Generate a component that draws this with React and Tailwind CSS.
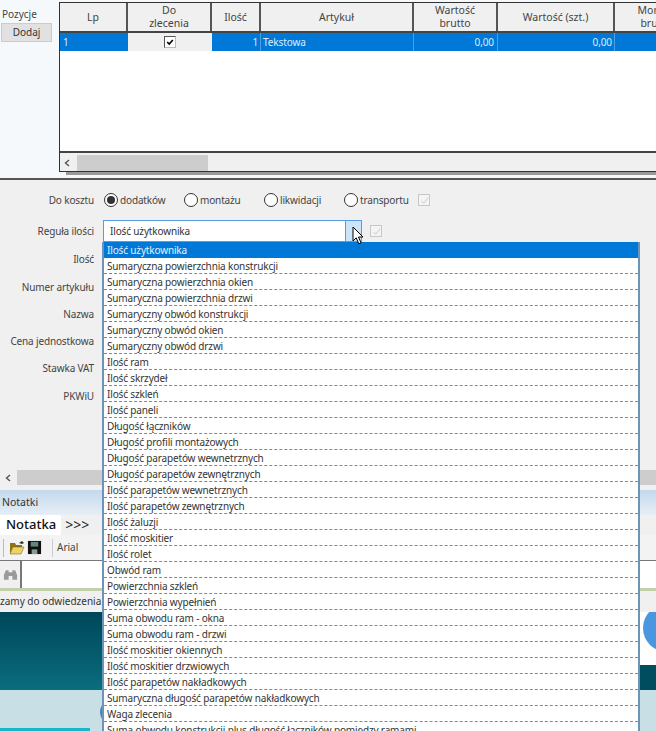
import React from 'react';

const columns = [
  { label: ['Lp'], width: 'w-[68px]' },
  { label: ['Do', 'zlecenia'], width: 'w-[84px]' },
  { label: ['Ilość'], width: 'w-[49px]' },
  { label: ['Artykuł'], width: 'w-[153px]' },
  { label: ['Wartość', 'brutto'], width: 'w-[84px]' },
  { label: ['Wartość (szt.)'], width: 'w-[117px]' },
  { label: ['Montaż', 'brutto'], width: 'w-[84px]' },
];

const options = [
  'Ilość użytkownika',
  'Sumaryczna powierzchnia konstrukcji',
  'Sumaryczna powierzchnia okien',
  'Sumaryczna powierzchnia drzwi',
  'Sumaryczny obwód konstrukcji',
  'Sumaryczny obwód okien',
  'Sumaryczny obwód drzwi',
  'Ilość ram',
  'Ilość skrzydeł',
  'Ilość szkleń',
  'Ilość paneli',
  'Długość łączników',
  'Długość profili montażowych',
  'Długość parapetów wewnetrznych',
  'Długość parapetów zewnętrznych',
  'Ilość parapetów wewnetrznych',
  'Ilość parapetów zewnętrznych',
  'Ilość żaluzji',
  'Ilość moskitier',
  'Ilość rolet',
  'Obwód ram',
  'Powierzchnia szkleń',
  'Powierzchnia wypełnień',
  'Suma obwodu ram - okna',
  'Suma obwodu ram - drzwi',
  'Ilość moskitier okiennych',
  'Ilość moskitier drzwiowych',
  'Ilość parapetów nakładkowych',
  'Sumaryczna długość parapetów nakładkowych',
  'Waga zlecenia',
  'Suma obwodu konstrukcji plus długość łączników pomiędzy ramami',
];

const labels = [
  ['Ilość', 'h-[28px]'],
  ['Numer artykułu', 'h-[28px]'],
  ['Nazwa', 'h-[27px]'],
  ['Cena jednostkowa', 'h-[27px]'],
  ['Stawka VAT', 'h-[27px]'],
  ['PKWiU', 'h-[28px]'],
];

const Radio = ({ label, checked, width }) => (
  <div className={`flex items-center gap-[2px] ${width}`}>
    <span className="flex h-[14px] w-[14px] items-center justify-center rounded-full border border-[#333] bg-white">
      {checked && <span className="h-[8px] w-[8px] rounded-full bg-[#333]" />}
    </span>
    <span className="text-[#444]">{label}</span>
  </div>
);

const DisabledCheck = () => (
  <span className="flex h-[12px] w-[12px] items-center justify-center border border-[#c8c8c8] bg-[#f4f4f4]">
    <svg viewBox="0 0 10 10" className="h-[9px] w-[9px]" fill="none" stroke="#c4c4c4" strokeWidth="1">
      <path d="M1.5 5.5l2.5 2.5 5-6" />
    </svg>
  </span>
);

const Chevron = () => (
  <svg viewBox="0 0 6 8" className="h-[8px] w-[6px]" fill="none" stroke="#555" strokeWidth="1.4">
    <path d="M5 1L1.500 4 5 7" />
  </svg>
);

const Grid = () => (
  <div className="flex h-[170px] flex-col overflow-hidden border border-r-0 border-[#333] bg-white">
    <div className="flex h-[30px] shrink-0 border-b-2 border-[#444]">
      {columns.map((c) => (
        <div
          key={c.label[0]}
          className={`${c.width} flex shrink-0 flex-col items-center justify-center border-r-2 border-[#555] bg-[#f0f0f0] text-[10.5px] leading-[13px] text-[#444]`}
        >
          {c.label.map((l) => (
            <span key={l} className="whitespace-nowrap">{l}</span>
          ))}
        </div>
      ))}
    </div>
    <div className="flex h-[18px] shrink-0 bg-[#0078d7] text-[10px] leading-[18px] tracking-[-0.1px] text-[#dcecfa]">
      <div className="w-[68px] shrink-0 pl-[3px]">1</div>
      <div className="flex w-[84px] shrink-0 items-center justify-center bg-[#f0f0f0]">
        <span className="flex h-[12px] w-[12px] items-center justify-center border border-t-[#555] border-l-[#555] border-r-[#bbb] border-b-[#bbb] bg-white">
          <svg viewBox="0 0 10 10" className="h-[8px] w-[8px]" fill="none" stroke="#000" strokeWidth="2">
            <path d="M1.500 5l2.500 2.500 4.500-5" />
          </svg>
        </span>
      </div>
      <div className="w-[49px] shrink-0 border-r border-[#4c9fe2] pr-[2px] text-right">1</div>
      <div className="w-[153px] shrink-0 border-r border-[#4c9fe2] pl-[2px]">Tekstowa</div>
      <div className="w-[84px] shrink-0 border-r border-[#4c9fe2] pr-[3px] text-right">0,00</div>
      <div className="w-[117px] shrink-0 border-r border-[#4c9fe2] pr-[2px] text-right">0,00</div>
      <div className="w-[84px] shrink-0" />
    </div>
    <div className="flex-1" />
    <div className="flex h-[20px] shrink-0 items-end border-t-2 border-[#444] bg-[#f0f0f0]">
      <span className="flex h-[16px] w-[17px] items-center pl-[4px]"><Chevron /></span>
      <div className="h-[16px] w-[131px] bg-[#cdcdcd]" />
    </div>
  </div>
);

const Dropdown = () => (
  <div className="absolute left-[102px] top-[62px] z-10 w-[538px] border-x-2 border-x-[#6b94b8] bg-white text-[10px] tracking-[-0.15px] text-[#333]">
    {options.map((o, i) => (
      <div
        key={o}
        className={`h-[16px] whitespace-nowrap pl-[3px] pt-[1px] leading-[15px] ${
          i === 0 ? 'bg-[#0078d7] text-[#e6f1fb]' : 'border-b border-dashed border-[#888]'
        }`}
      >
        {o}
      </div>
    ))}
  </div>
);

const Form = () => (
  <div className="relative h-[310px] bg-[#f0f0f0] text-[10px] tracking-[-0.15px] text-[#444]">
    <div className="flex h-[40px] items-center">
      <span className="w-[95px] pr-[1px] text-right">Do kosztu</span>
      <div className="ml-[9px] flex items-center">
        <Radio label="dodatków" checked width="w-[80px]" />
        <Radio label="montażu" width="w-[80px]" />
        <Radio label="likwidacji" width="w-[80px]" />
        <Radio label="transportu" width="w-[74px]" />
        <DisabledCheck />
      </div>
    </div>
    <div className="flex h-[22px] items-center">
      <span className="w-[95px] pr-[1px] text-right">Reguła ilości</span>
      <div className="ml-[8px] flex h-[22px] w-[243px] items-center border border-[#569de5] bg-white pl-[6px] text-[#333]">
        Ilość użytkownika
      </div>
      <div className="h-[22px] w-[16px] border border-l-0 border-[#569de5] bg-[#cce4f7]" />
      <span className="ml-[8px]"><DisabledCheck /></span>
    </div>
    <div className="pt-[3px]">
      {labels.map(([text, h]) => (
        <div key={text} className={`flex w-[95px] items-center justify-end pr-[1px] ${h}`}>{text}</div>
      ))}
    </div>
    <Dropdown />
    <svg viewBox="0 0 12 19" className="absolute left-[352px] top-[46px] z-20 h-[19px] w-[12px]">
      <path d="M1 1v14l3.200-3.200 2.600 6 2.200-1-2.500-5.800H11z" fill="#fff" stroke="#000" strokeWidth="1" />
    </svg>
    <div className="absolute bottom-[5px] left-0 flex h-[15px] w-full items-center">
      <span className="flex w-[17px] items-center pl-[5px]"><Chevron /></span>
      <div className="h-[15px] flex-1 bg-[#cdcdcd]" />
    </div>
  </div>
);

const Notes = () => (
  <div>
    <div className="flex h-[25px] items-center bg-gradient-to-b from-[#c4d9ed] to-[#e6eef6] pl-[2px] text-[10.5px] text-[#333]">
      Notatki
    </div>
    <div className="flex h-[20px] items-end bg-[#f0f0f0]">
      <span className="flex h-[20px] items-center bg-white pl-[6px] pr-[5px] text-[13px] font-medium text-[#111]">Notatka</span>
      <span className="pb-[1px] pl-[4px] text-[14px] leading-[18px] text-[#222]">{'>>>'}</span>
    </div>
    <div className="flex h-[26px] items-center border-b border-[#777] bg-[#f3f3f3] pl-[3px]">
      <span className="h-[18px] w-[1px] bg-[#bbb]" />
      <svg viewBox="0 0 16 16" className="ml-[5px] h-[16px] w-[16px]">
        <path d="M1 3h5l1 2h6v2H4L1 14z" fill="#8a7414" />
        <path d="M4 7h11l-3 7H1z" fill="#f0d264" stroke="#6b5a10" strokeWidth="0.5" />
        <path d="M10 3l3-2 2 2-2 1z" fill="#333" />
      </svg>
      <svg viewBox="0 0 16 16" className="ml-[2px] h-[15px] w-[15px]">
        <path d="M1 1h14v14H1z" fill="#111" />
        <path d="M4 2h8v5H4z" fill="#5f8a78" />
        <path d="M5 10h6v5H5z" fill="#8a9a9a" />
      </svg>
      <span className="ml-[10px] h-[18px] w-[1px] bg-[#ccc]" />
      <span className="ml-[4px] text-[10px] text-[#444]">Arial</span>
    </div>
    <div className="flex h-[30px] flex-col border-b-[3px] border-[#c3cfa8] bg-white">
      <div className="flex flex-1">
        <span className="flex w-[20px] items-center justify-center bg-[#f0f0f0]">
          <svg viewBox="0 0 16 12" className="h-[12px] w-[15px]" fill="#9a9a9a">
            <path d="M1 6l2-5h3v10H1zM15 6l-2-5h-3v10h5zM6 3h4v4H6z" />
          </svg>
        </span>
        <div className="flex-1 border-l-2 border-[#777] bg-white" />
      </div>
    </div>
    <div className="flex h-[21px] items-center overflow-hidden whitespace-nowrap bg-[#f0f0f0] text-[10px] text-[#333]">
      zamy do odwiedzenia
    </div>
  </div>
);

const Banner = () => (
  <div className="relative h-[119px] overflow-hidden bg-white">
    <div className="flex h-[78px]">
      <div className="w-[102px] bg-gradient-to-b from-[#00475a] to-[#0b6d7e]" />
      <div className="relative flex-1">
        <div className="absolute left-[541px] top-[-8px] h-[48px] w-[48px] rounded-full bg-[#4a97e0]" />
        <div className="absolute bottom-0 left-0 h-[25px] w-full bg-[#004d60]" />
      </div>
    </div>
    <div className="h-[41px] bg-[#c8dfe6]" />
    <div className="absolute left-[100px] top-[88px] h-[24px] w-[24px] rounded-full bg-[#4a87b8]" />
    <div className="absolute bottom-0 left-0 h-[3px] w-[90px] bg-[#18b6c8]" />
  </div>
);

export default function App() {
  return (
    <div className="relative h-[731px] w-[656px] overflow-hidden bg-[#f0f0f0] font-['Noto_Sans',sans-serif]">
      <div className="flex h-[180px] border-b-2 border-[#555] bg-[#f5f9fc] pt-[2px]">
        <div className="w-[59px] shrink-0 pt-[4px] text-[10px] text-[#444]">
          <div className="pl-[2px] leading-[16px]">Pozycje</div>
          <div className="ml-[1px] mt-[1px] flex h-[19px] w-[51px] items-center justify-center border border-[#ccc] bg-[#e1e1e1] text-[#333]">Dodaj</div>
        </div>
        <div className="min-w-0 flex-1">
          <Grid />
          <div className="ml-[7px] h-[3px] bg-[#999]" />
        </div>
      </div>
      <Form />
      <Notes />
      <Banner />
    </div>
  );
}
